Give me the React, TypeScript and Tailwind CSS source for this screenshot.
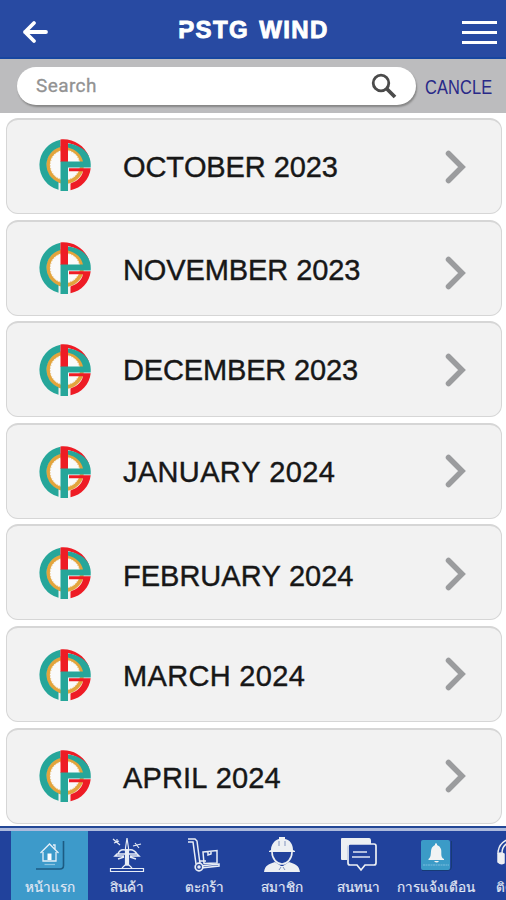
import type { ReactNode } from "react";

const months = [
  { name: "OCTOBER 2023", logo: "-mt-[3px]", text: "pt-0.5 tracking-[-0.100px]", arrow: "pt-0" },
  { name: "NOVEMBER 2023", logo: "-mt-px", text: "pt-[5px] tracking-[-0.100px]", arrow: "pt-[9px]" },
  { name: "DECEMBER 2023", logo: "mt-px", text: "pt-0.5 tracking-[-0.150px]", arrow: "pt-0" },
  { name: "JANUARY 2024", logo: "mt-px", text: "pt-0.5 tracking-[0.360px]", arrow: "pt-0" },
  { name: "FEBRUARY 2024", logo: "mt-px", text: "pt-[7px]", arrow: "pt-0.5" },
  { name: "MARCH 2024", logo: "mt-0.5", text: "pt-1 tracking-[0.330px]", arrow: "pt-0" },
  { name: "APRIL 2024", logo: "mt-0", text: "pt-1 tracking-[0.150px]", arrow: "pt-0" },
];

const Logo = () => (
  <svg viewBox="0 0 52 52" className="size-[52px]">
    <circle cx="26" cy="26" r="17" fill="#fafafa" stroke="#e3a43c" strokeWidth="3.800" />
    <circle cx="26" cy="26" r="14.800" fill="none" stroke="#e8b869" strokeWidth="1" strokeDasharray="1 1.800" />
    <path d="M19.500 50.800A25.700 25.700 0 0 1 21.500.700V8A18.500 18.500 0 0 0 19.500 43.300Z" fill="#26a69a" />
    <path d="M21.500.400C34-.800 45 6 50 17.500L46 14C41 8.500 36.500 5.500 29 4V23H21.500Z" fill="#ee1c25" />
    <path d="M29 4.500C39 5.500 46.500 10.500 49.500 16.500C51.500 20 52 24 51.700 28.500H29V52H21.500V22.500H44C42.500 15.500 37 10.500 29 8.500Z" fill="#26a69a" />
    <path d="M30 29.300H51.700C50.500 40.500 42.500 49 31.500 51.300V44.500C38 42.500 43 38 44 32.300H30Z" fill="#ee1c25" />
  </svg>
);

const HomeIcon = () => (
  <svg viewBox="0 0 30 30" className="size-[30px]" fill="none">
    <path d="M1 29H25Q28.500 29 28.500 25.500V1" stroke="#1d5b82" strokeWidth="1.600" />
    <path d="M5.500 13L14.500 4L23.500 13M8 12V21H21V12M20 9V5H18" stroke="#e5eff8" strokeWidth="1.300" />
    <path d="M12.500 20V13.500H16.500V20Z" fill="#fff" />
    <path d="M9.500 24.500H20" stroke="#8cc5e2" strokeWidth="1.200" />
  </svg>
);

const TurbineIcon = () => (
  <svg viewBox="0 0 36 36" className="size-9" fill="none" stroke="#e8edf6" strokeWidth="1.200">
    <path d="M1.500 34.500V31.500H34.500V34.500ZM13 31L16 28H20L23 31" />
    <path d="M18 1L16.500 11V28H19.500V11ZM4 2L11 8M5 6L10 4M24 9L32 7M26 6L30 11M8 2V5" />
    <path d="M16 13C12 12 10 14 9 17M20 13C24 12 26 14 28 17M16 17H8L6 19H15M20 17H28L30 19H21M15 20L9 22M21 20L27 22" strokeWidth="1.500" />
    <path d="M18 12V28" strokeWidth="3.500" />
  </svg>
);

const CartIcon = () => (
  <svg viewBox="0 0 36 36" className="size-9" fill="none" stroke="#e8edf6" strokeWidth="1.500">
    <path d="M2 2H9L11 4L14 27M2 5H7L10 27M14 24H20M15 31L33 29V27L14 29" />
    <circle cx="13" cy="30" r="3.800" fill="#21429c" strokeWidth="1.700" />
    <circle cx="13" cy="30" r="1" fill="#fff" />
    <path d="M17 15L31 13.500V26L18 26.500ZM22 15V18L25 17V14" />
  </svg>
);

const WorkerIcon = () => (
  <svg viewBox="0 0 36 36" className="size-9">
    <path d="M7 13C7 7 11 3 15 2V0H21V2C26 3 29 7 29 13L31 14V15H5V14Z" fill="#edf0f3" />
    <path d="M8 15C8 22 13 27 18 27S28 22 28 15" fill="none" stroke="#edf0f3" strokeWidth="1.600" />
    <path d="M11 25C5 27 1 28 0 35H36C35 28 31 27 25 25L19 29H17Z" fill="#edf0f3" />
    <path d="M15 4V9M21 4V9M17 30L15 33M19 30L21 33" stroke="#8395be" strokeWidth="1" />
  </svg>
);

const ChatIcon = () => (
  <svg viewBox="0 0 38 36" className="h-9 w-[38px]">
    <path d="M1 2Q1 1 2 1H29Q31 1 31 4V8H9Q7 8 7 10V23H2Q1 23 1 22Z" fill="#edf0f3" />
    <path d="M10 7H34Q36 7 36 9V26Q36 28 34 28H25L21 33L17 28H10Q8 28 8 26V9Q8 7 10 7Z" fill="#21429c" stroke="#edf0f3" strokeWidth="1.700" />
    <path d="M13 15H27M12 20H30" stroke="#dfe6f4" strokeWidth="1.700" />
  </svg>
);

const BellIcon = () => (
  <svg viewBox="0 0 32 32" className="size-8">
    <path d="M2 31.500H28Q31.500 31 31.500 28V2" fill="none" stroke="#173b76" />
    <rect x="1" y="1" width="29" height="30" rx="2" fill="#3b9bc7" />
    <path d="M8.500 20C12 18 10 12 12 8.500Q13.500 6.500 15 6V4.500H17V6Q20 7 21 10C22 14 20 18 24 20V21H8.500ZM14 22H19Q17 25 14 22" fill="#f1f3f4" />
    <path d="M3 26H29" stroke="#7dbddd" strokeDasharray="2 .500" strokeWidth="1.200" />
  </svg>
);

const HeadsetIcon = () => (
  <svg viewBox="0 0 36 36" className="size-9" fill="none" stroke="#edf0f3" strokeWidth="1.500">
    <path d="M3 17C3 7 10 2 18 2S33 7 33 17M7 16C7 9 12 5 18 5S29 9 29 16" />
    <path d="M3 17Q6 15 9 17V26Q6 28 3 25ZM28 17H33V26H28Z" fill="#edf0f3" />
  </svg>
);

const tabs: { label: string; icon: ReactNode; active?: boolean }[] = [
  { label: "หน้าแรก", icon: <HomeIcon />, active: true },
  { label: "สินค้า", icon: <TurbineIcon /> },
  { label: "ตะกร้า", icon: <CartIcon /> },
  { label: "สมาชิก", icon: <WorkerIcon /> },
  { label: "สนทนา", icon: <ChatIcon /> },
  { label: "การแจ้งเตือน", icon: <BellIcon /> },
  { label: "ติดต่อ", icon: <HeadsetIcon /> },
];

const Header = () => (
  <header className="flex h-[59px] shrink-0 items-center justify-between border-b-2 border-[#1746a0] bg-[#284aa2] pr-[9px] pl-[22px] pt-[7px]">
    <svg viewBox="0 0 26 24" className="h-6 w-[26px]" fill="none" stroke="#fff" strokeWidth="3.800" strokeLinecap="round" strokeLinejoin="round">
      <path d="M12 3L3 12L12 21M3 12H24" />
    </svg>
    <h1 className="relative mb-1 -ml-[3px] text-[24px] leading-7 font-bold tracking-[1.400px] whitespace-nowrap text-white [-webkit-text-stroke:0.900px_white] [word-spacing:2px]">
      PSTG WIND
      <span className="absolute top-[9px] -left-px h-[3px] w-[9px] bg-[#284aa2]" />
    </h1>
    <div className="flex w-[35px] flex-col gap-[7px]">
      <span className="h-[3px] bg-white" />
      <span className="h-[3px] bg-white" />
      <span className="h-[3px] bg-white" />
    </div>
  </header>
);

const SearchBar = () => (
  <div className="flex h-[54px] shrink-0 items-center bg-[#bcbcbe] pl-[17px]">
    <div className="flex h-[38px] w-[399px] shrink-0 items-center justify-between rounded-full bg-white pr-[19px] pl-[19px] shadow-[1px_2px_2px_#858585]">
      <span className="font-[Roboto] text-[19px] tracking-[0.400px] text-[#929292] [-webkit-text-stroke:0.300px_#929292]">Search</span>
      <svg viewBox="0 0 26 26" className="size-[26px]" fill="none" stroke="#4b4b4b">
        <circle cx="10" cy="10" r="7.800" strokeWidth="2.800" />
        <path d="M15.500 15.500L24 24" strokeWidth="3.800" />
      </svg>
    </div>
    <span className="ml-[9px] w-[66px] origin-left scale-x-[.78] pt-0.5 text-[21px] tracking-[0.200px] text-[#292988]">CANCLE</span>
  </div>
);

export default function App() {
  return (
    <div className="flex h-[900px] w-[506px] flex-col overflow-hidden bg-white font-['Liberation_Sans',sans-serif]">
      <Header />
      <SearchBar />
      <main className="flex min-h-0 flex-1 flex-col gap-[5.600px] pt-[5px] pr-1 pl-1.5">
        {months.map((month) => (
          <div key={month.name} className="flex h-24 shrink-0 items-center rounded-xl border border-t-2 border-[#d6d6d6] bg-[#f2f2f2] pr-[34px] pl-8">
            <div className={month.logo}>
              <Logo />
            </div>
            <span className={`ml-8 flex-1 text-[29px] leading-none whitespace-nowrap text-[#171717] [font-kerning:none] [-webkit-text-stroke:0.400px_#171717] ${month.text}`}>
              {month.name}
            </span>
            <div className={month.arrow}>
              <svg viewBox="0 0 22 34" className="h-[34px] w-[22px]" fill="none" stroke="#9b9c9e" strokeWidth="5.500" strokeLinecap="round">
                <path d="M3.500 3.500L17 17L3.500 30.500" />
              </svg>
            </div>
          </div>
        ))}
      </main>
      <nav className="h-[74px] shrink-0 overflow-hidden border-t-2 border-[#234796] bg-[#21429c]">
        <div className="flex h-full border-t-[3px] border-[#aebbdd] pl-[11px]">
          {tabs.map((tab) => (
            <div
              key={tab.label}
              className={`flex w-[77.300px] shrink-0 flex-col items-center pt-1.5 ${tab.active ? "bg-[#3d9aca]" : ""}`}
            >
              <div className="flex h-9 items-center">{tab.icon}</div>
              <span className="mt-[5px] text-[13.500px] leading-5 whitespace-nowrap text-[#e1e8f5] [-webkit-text-stroke:0.200px_#e1e8f5]">{tab.label}</span>
            </div>
          ))}
        </div>
      </nav>
    </div>
  );
}
